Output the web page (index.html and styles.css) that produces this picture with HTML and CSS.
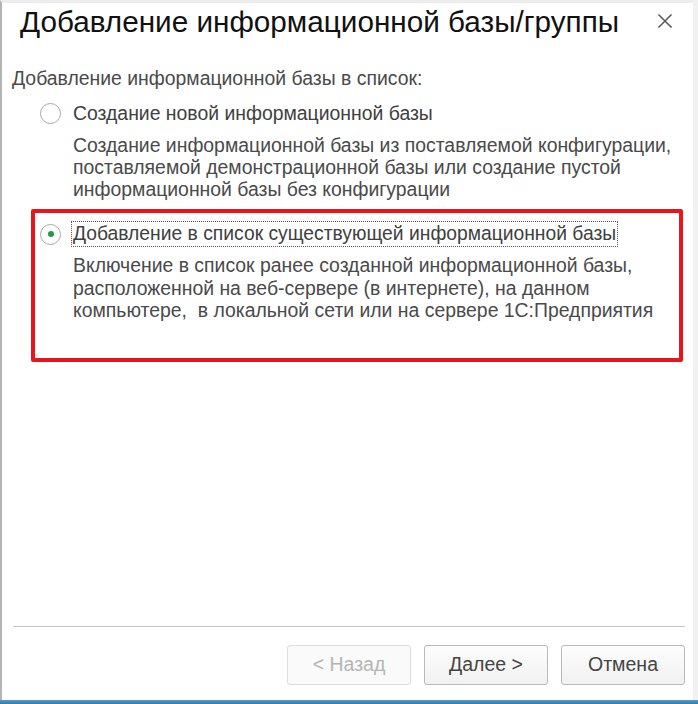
FILE: index.html
```html
<!DOCTYPE html>
<html lang="ru">
<head>
    <meta charset="UTF-8">
    <meta name="viewport" content="width=device-width, initial-scale=1.0">
    <title>Добавление информационной базы/группы</title>
    <link rel="stylesheet" href="styles.css">
</head>
<body>

<div class="screen">
    <div class="dialog">
        <div class="header">
            <h1 class="title">Добавление информационной базы/группы</h1>
            <span class="closeBtn">
                <svg width="16" height="16" viewBox="0 0 16 16">
                    <path d="M1.5 1.5 L14.5 14.5 M14.5 1.5 L1.5 14.5" stroke="#555" stroke-width="1.5" fill="none"/>
                </svg>
            </span>
        </div>

        <div class="content">
            <p class="caption">Добавление информационной базы в список:</p>

            <div class="option">
                <div class="optionRow">
                    <span class="radio"></span>
                    <span class="optionLabel">Создание новой информационной базы</span>
                </div>
                <p class="optionText">Создание информационной базы из поставляемой конфигурации,<br>поставляемой демонстрационной базы или создание пустой<br>информационной базы без конфигурации</p>
            </div>

            <div class="option highlighted">
                <div class="optionRow">
                    <span class="radio checked"></span>
                    <span class="optionLabel focused">Добавление в список существующей информационной базы</span>
                </div>
                <p class="optionText">Включение в список ранее созданной информационной базы,<br>расположенной на веб-сервере (в интернете), на данном<br>компьютере,&nbsp; в локальной сети или на сервере 1С:Предприятия</p>
            </div>
        </div>

        <div class="footer">
            <button class="btn" disabled>&lt; Назад</button>
            <button class="btn">Далее &gt;</button>
            <button class="btn">Отмена</button>
        </div>
    </div>
    <div class="taskbar"></div>
</div>

</body>
</html>
```

FILE: styles.css
```css
html, body {
    margin: 0;
    padding: 0;
}

body {
    background: #f1f1f1;
    font-family: "Liberation Sans", Arial, sans-serif;
    color: #333;
}

.screen {
    width: 698px;
    height: 704px;
    display: flex;
    flex-direction: column;
}

.dialog {
    flex: 1;
    width: 693px;
    background: #fff;
    border-left: 2px solid #b4b4b4;
    border-top: 3px solid #ececec;
    box-sizing: border-box;
    display: flex;
    flex-direction: column;
}

.header {
    display: flex;
    align-items: center;
    justify-content: space-between;
    padding: 0 20px 0 18px;
    height: 38px;
}

.title {
    margin: 0;
    font-size: 29.7px;
    font-weight: normal;
    color: #111;
}

.closeBtn {
    display: flex;
    margin-top: -2px;
}

.content {
    flex: 1;
    padding: 26px 0 0 10px;
}

.caption {
    margin: 0 0 12px 0;
    font-size: 19.4px;
    line-height: 22px;
    color: #4a4a4a;
}

.option {
    margin-left: 28px;
}

.optionRow {
    display: flex;
    align-items: center;
    gap: 12px;
    height: 24px;
}

.radio {
    width: 21px;
    height: 21px;
    border: 1px solid #a8a8a8;
    border-radius: 50%;
    box-sizing: border-box;
    display: flex;
    align-items: center;
    justify-content: center;
    background: #fff;
}

.radio.checked::after {
    content: "";
    width: 6px;
    height: 6px;
    border-radius: 50%;
    background: #1f9a4a;
}

.optionLabel {
    font-size: 19.4px;
    color: #404040;
    line-height: 22px;
}

.optionLabel.focused {
    font-size: 19.3px;
    outline: 1px dotted #555;
    outline-offset: 1px;
}

.optionText {
    margin: 9px 0 0 33px;
    font-size: 19.4px;
    line-height: 22px;
    color: #4a4a4a;
}

.highlighted {
    margin: 9px 0 0 19px;
    width: 652px;
    height: 153px;
    border: 4px solid #e8161b;
    border-radius: 2px;
    box-sizing: border-box;
    padding: 9px 0 0 5px;
}

.highlighted .optionText {
    margin-top: 8px;
    line-height: 22.5px;
}

.footer {
    margin: 0 8px 0 11px;
    border-top: 1px solid #c4c4c4;
    height: 74px;
    display: flex;
    justify-content: flex-end;
    align-items: center;
    gap: 13px;
    padding-top: 2px;
    box-sizing: border-box;
}

.btn {
    width: 124px;
    height: 40px;
    background: linear-gradient(#fdfdfd, #f1f1f1);
    border: 1px solid #b9b9b9;
    border-radius: 3px;
    font-family: "Liberation Sans", Arial, sans-serif;
    font-size: 19.5px;
    color: #444;
}

.btn:disabled {
    border-color: #dcdcdc;
    color: #b5b5b5;
    background: #fafafa;
}

.taskbar {
    height: 4px;
    background: linear-gradient(#5a9cc6, #2f7aab);
}
```
